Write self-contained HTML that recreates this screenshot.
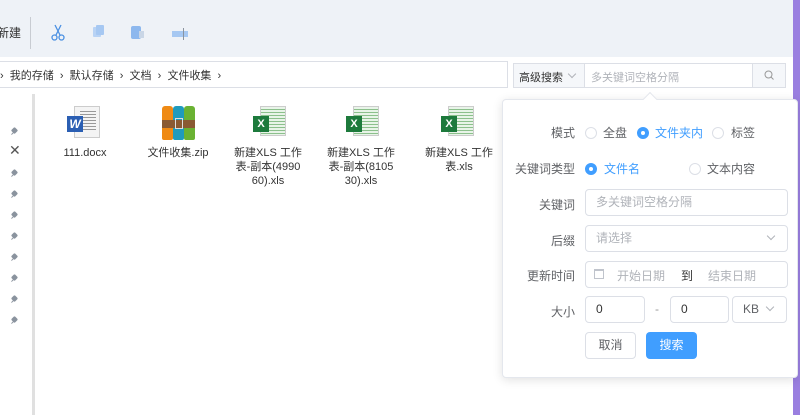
<!DOCTYPE html>
<html><head><meta charset="utf-8"><style>
*{margin:0;padding:0;box-sizing:border-box}
body{width:800px;height:415px;overflow:hidden;background:#fff;font-family:"Liberation Sans","Noto Sans CJK SC",sans-serif;font-size:12px;color:#333;position:relative}
.a{position:absolute}
.t{position:absolute;white-space:nowrap}
.lbl{position:absolute;width:80px;text-align:right;color:#606266;font-size:12px}
.inp{position:absolute;border:1px solid #dcdfe6;border-radius:4px;background:#fff;height:27px;line-height:25px;padding-left:10px;color:#333;font-size:12px}
.ph{color:#b0b3b9}
.rad{position:absolute;width:12px;height:12px;border:1px solid #dcdfe6;border-radius:50%;background:#fff}
.rad.on{border-color:#409eff;background:#409eff}
.rad.on:after{content:"";position:absolute;left:3px;top:3px;width:4px;height:4px;border-radius:50%;background:#fff}
.chev{position:absolute;width:6px;height:6px;border-right:1px solid #b0b3b9;border-bottom:1px solid #b0b3b9;transform:rotate(45deg)}
.pin{position:absolute;left:11px;width:7px;height:7px;font-size:0}
.pin:before{content:"";position:absolute;left:1px;top:0;width:5px;height:5px;background:#8a939e;transform:rotate(45deg);border-radius:1px}
.pin:after{content:"";position:absolute;left:0;top:5px;width:3px;height:1px;background:#8a939e;transform:rotate(-45deg)}
.fn{position:absolute;width:80px;text-align:center;font-size:11px;line-height:14px;color:#333}
</style></head><body>
<div class="a" style="left:0;top:0;width:793px;height:57px;background:#eef2f7"></div>
<div class="t" style="left:-3px;top:24px;font-size:12px;color:#333">新建</div>
<div class="a" style="left:30px;top:17px;width:1px;height:32px;background:#c8ccd2"></div>
<svg class="a" style="left:50px;top:24px" width="16" height="17" viewBox="0 0 16 17"><path d="M5 1 L10 11 M11 1 L6 11" stroke="#4a90e2" stroke-width="1.3" fill="none"/><circle cx="4.5" cy="13.5" r="2.5" stroke="#4a90e2" fill="none" stroke-width="1.3"/><circle cx="11.5" cy="13.5" r="2.5" stroke="#4a90e2" fill="none" stroke-width="1.3"/></svg>
<div class="a" style="left:93px;top:27px;width:8px;height:10px;background:#b8d3f5;border-radius:1px"></div>
<div class="a" style="left:96px;top:25px;width:8px;height:10px;background:#a6c8f2;border-radius:1px"></div>
<div class="a" style="left:131px;top:26px;width:10px;height:13px;background:#8db8ee;border-radius:2px"></div>
<div class="a" style="left:139px;top:31px;width:5px;height:7px;background:#c9d6e6"></div>
<div class="a" style="left:172px;top:31px;width:16px;height:6px;background:#a6c8f2"></div>
<div class="a" style="left:183px;top:28px;width:1px;height:12px;background:#8a939e"></div>
<div class="a" style="left:0;top:61px;width:508px;height:27px;border:1px solid #dcdfe6;border-left:none;background:#fff"></div>
<div class="t" style="left:0;top:67px;font-size:11px;color:#333">›&nbsp; 我的存储 &nbsp;›&nbsp; 默认存储 &nbsp;›&nbsp; 文档 &nbsp;›&nbsp; 文件收集 &nbsp;›</div>
<div class="a" style="left:513px;top:63px;width:273px;height:25px;border:1px solid #dcdfe6;background:#fff"></div>
<div class="a" style="left:514px;top:64px;width:71px;height:23px;background:#f5f7fa;border-right:1px solid #dcdfe6"></div>
<div class="t" style="left:519px;top:69px;font-size:11px">高级搜索</div>
<div class="chev" style="left:569px;top:71px"></div>
<div class="t ph" style="left:591px;top:69px;font-size:11px">多关键词空格分隔</div>
<div class="a" style="left:752px;top:64px;width:33px;height:23px;background:#f5f7fa;border-left:1px solid #dcdfe6"></div>
<svg class="a" style="left:764px;top:70px" width="10" height="10"><circle cx="4.5" cy="4.5" r="3.5" stroke="#999" fill="none"/><path d="M7 7l2.5 2.5" stroke="#999"/></svg>
<div class="a" style="left:793px;top:0;width:7px;height:415px;background:#9a7fe0"></div>
<div class="a" style="left:32px;top:94px;width:3px;height:321px;background:#e0e0e0"></div>
<div class="pin" style="top:128px"></div>
<div class="t" style="left:9px;top:142px;font-size:14px;color:#555">✕</div>
<div class="pin" style="top:170px"></div>
<div class="pin" style="top:191px"></div>
<div class="pin" style="top:212px"></div>
<div class="pin" style="top:233px"></div>
<div class="pin" style="top:254px"></div>
<div class="pin" style="top:275px"></div>
<div class="pin" style="top:296px"></div>
<div class="pin" style="top:317px"></div>
<div class="a" style="left:74px;top:106px;width:26px;height:32px;background:#f4f4f4;border:1px solid #ccc"></div>
<div class="a" style="left:80px;top:111px;width:16px;height:20px;background:repeating-linear-gradient(#999 0 1px,transparent 1px 3px)"></div>
<div class="a" style="left:67px;top:116px;width:16px;height:16px;background:#2b5fb3;color:#fff;font-weight:bold;font-size:12px;text-align:center;line-height:16px;font-style:italic">W</div>
<div class="fn" style="left:45px;top:146px">111.docx</div>
<div class="a" style="left:162px;top:106px;width:11px;height:34px;background:#ef8a14;border-radius:3px 3px 2px 2px"></div>
<div class="a" style="left:173px;top:106px;width:11px;height:34px;background:#1f9bbd;border-radius:3px 3px 2px 2px"></div>
<div class="a" style="left:184px;top:106px;width:11px;height:34px;background:#6ab233;border-radius:3px 3px 2px 2px"></div>
<div class="a" style="left:162px;top:120px;width:33px;height:8px;background:#8a5a33"></div>
<div class="a" style="left:175px;top:118px;width:8px;height:11px;border:1px solid #ddd"></div>
<div class="fn" style="left:138px;top:146px">文件收集.zip</div>
<div class="a" style="left:260px;top:106px;width:26px;height:30px;background:repeating-linear-gradient(#e8f4e8 0 2px,#8cc08c 2px 3px);border:1px solid #ccc"></div>
<div class="a" style="left:253px;top:116px;width:16px;height:16px;background:#1d7a3c;color:#fff;font-weight:bold;font-size:11px;text-align:center;line-height:16px">X</div>
<div class="fn" style="left:228px;top:146px">新建XLS 工作<br>表-副本(4990<br>60).xls</div>
<div class="a" style="left:353px;top:106px;width:26px;height:30px;background:repeating-linear-gradient(#e8f4e8 0 2px,#8cc08c 2px 3px);border:1px solid #ccc"></div>
<div class="a" style="left:346px;top:116px;width:16px;height:16px;background:#1d7a3c;color:#fff;font-weight:bold;font-size:11px;text-align:center;line-height:16px">X</div>
<div class="fn" style="left:321px;top:146px">新建XLS 工作<br>表-副本(8105<br>30).xls</div>
<div class="a" style="left:448px;top:106px;width:26px;height:30px;background:repeating-linear-gradient(#e8f4e8 0 2px,#8cc08c 2px 3px);border:1px solid #ccc"></div>
<div class="a" style="left:441px;top:116px;width:16px;height:16px;background:#1d7a3c;color:#fff;font-weight:bold;font-size:11px;text-align:center;line-height:16px">X</div>
<div class="fn" style="left:419px;top:146px">新建XLS 工作<br>表.xls</div>
<div class="a" style="left:502px;top:99px;width:296px;height:279px;background:#fff;border:1px solid #e4e7ed;border-radius:4px;box-shadow:0 2px 10px rgba(0,0,0,.12)"></div>
<div class="a" style="left:645px;top:94px;width:10px;height:10px;background:#fff;border-left:1px solid #e4e7ed;border-top:1px solid #e4e7ed;transform:rotate(45deg)"></div>
<div class="lbl" style="left:495px;top:124px">模式</div>
<div class="rad" style="left:585px;top:127px"></div><div class="t" style="left:603px;top:124px;color:#606266">全盘</div>
<div class="rad on" style="left:637px;top:127px"></div><div class="t" style="left:655px;top:124px;color:#409eff">文件夹内</div>
<div class="rad" style="left:712px;top:127px"></div><div class="t" style="left:731px;top:124px;color:#606266">标签</div>
<div class="lbl" style="left:495px;top:160px">关键词类型</div>
<div class="rad on" style="left:585px;top:163px"></div><div class="t" style="left:604px;top:160px;color:#409eff">文件名</div>
<div class="rad" style="left:689px;top:163px"></div><div class="t" style="left:707px;top:160px;color:#606266">文本内容</div>
<div class="lbl" style="left:495px;top:196px">关键词</div>
<div class="inp ph" style="left:585px;top:189px;width:203px">多关键词空格分隔</div>
<div class="lbl" style="left:495px;top:232px">后缀</div>
<div class="inp ph" style="left:585px;top:225px;width:203px">请选择</div>
<div class="chev" style="left:768px;top:233px"></div>
<div class="lbl" style="left:495px;top:267px">更新时间</div>
<div class="inp" style="left:585px;top:261px;width:203px"></div>
<div class="a" style="left:594px;top:269px;width:10px;height:10px;border:1px solid #c0c4cc;border-top-width:2px"></div>
<div class="t ph" style="left:617px;top:267px">开始日期</div>
<div class="t" style="left:681px;top:267px;color:#333">到</div>
<div class="t ph" style="left:708px;top:267px">结束日期</div>
<div class="lbl" style="left:495px;top:303px">大小</div>
<div class="inp" style="left:585px;top:296px;width:60px">0</div>
<div class="t" style="left:655px;top:302px;color:#999">-</div>
<div class="inp" style="left:670px;top:296px;width:59px">0</div>
<div class="inp" style="left:732px;top:296px;width:55px;color:#606266">KB</div>
<div class="chev" style="left:767px;top:304px"></div>
<div class="a" style="left:585px;top:332px;width:51px;height:27px;border:1px solid #dcdfe6;border-radius:4px;text-align:center;line-height:25px;color:#606266">取消</div>
<div class="a" style="left:646px;top:332px;width:51px;height:27px;background:#409eff;border-radius:4px;text-align:center;line-height:27px;color:#fff">搜索</div>
</body></html>
